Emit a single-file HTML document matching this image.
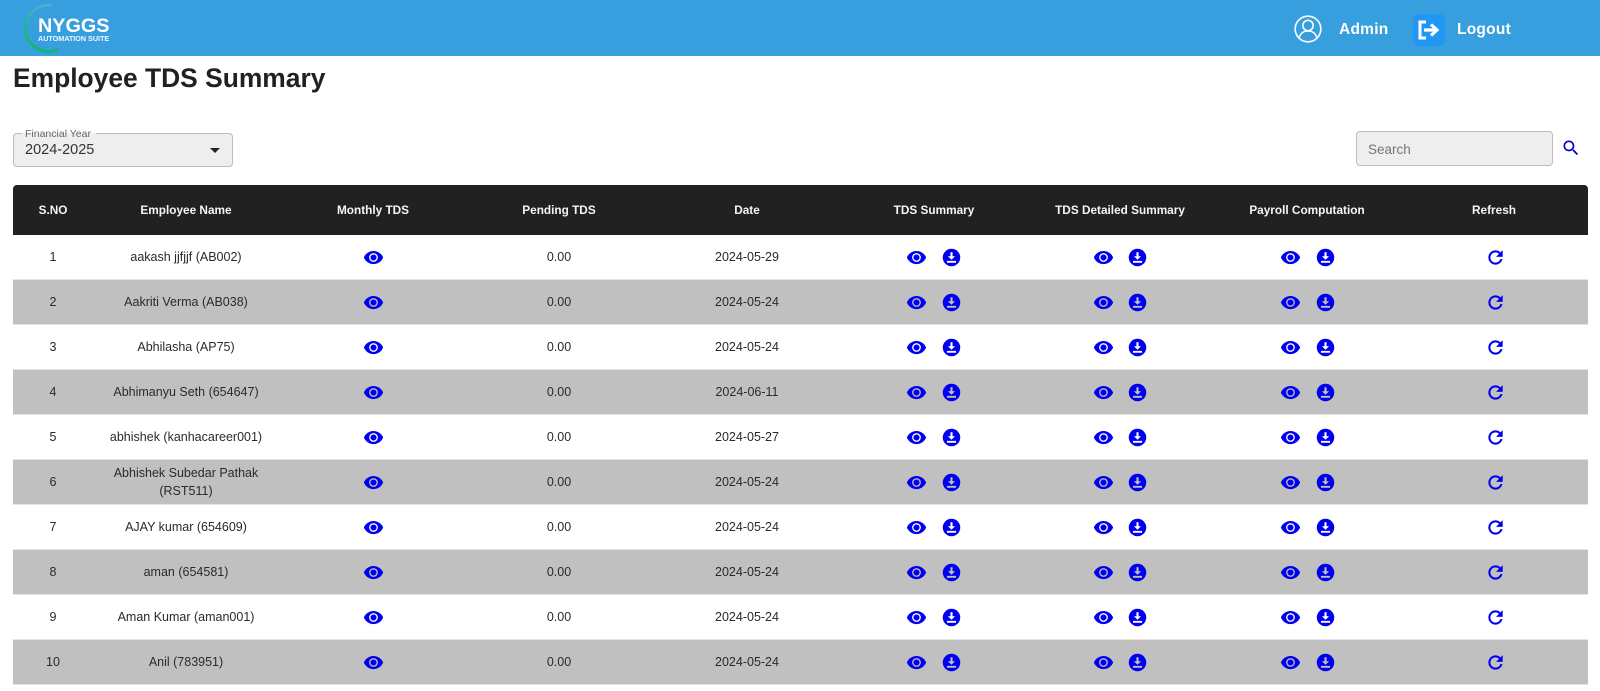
<!DOCTYPE html>
<html><head><meta charset="utf-8"><title>Employee TDS Summary</title>
<style>
*{box-sizing:border-box}
html,body{margin:0;padding:0;background:#fff}
body{width:1600px;height:691px;overflow:hidden;position:relative;font-family:"Liberation Sans",sans-serif;color:#222}
.hd{position:absolute;left:0;top:0;width:1600px;height:56px;background:#389fdf}
.a{position:absolute;white-space:nowrap}
.tb{position:absolute;left:13px;top:185px;width:1575px;height:50px;background:#212121;border-radius:4px 4px 0 0}
.r{position:absolute;left:13px;width:1575px;height:45px;background:#fff;border-bottom:1px solid #e4e4e4}
.g{background:#c0c0c0}
.c{position:absolute;top:0;height:44px;display:flex;align-items:center;justify-content:center;text-align:center;font-size:12.5px;line-height:18px;color:#2a2a2a}
.tb .c{height:50px;color:#f5f5f5;font-weight:bold;font-size:11.8px}
.c1{left:-10px;width:100px}.c2{left:73px;width:200px}.c3{left:260px;width:200px}.c4{left:446px;width:200px}.c5{left:634px;width:200px}.c6{left:821px;width:200px}.c7{left:1007px;width:200px}.c8{left:1194px;width:200px}.c9{left:1381px;width:200px}
svg.i{position:absolute;top:11.5px;width:21px;height:21px;fill:#0000ee}
.e1{left:350px}.e2{left:893px}.d2{left:928px}.e3{left:1080px}.d3{left:1114px}.e4{left:1267px}.d4{left:1302px}.f{left:1471.5px}
</style></head><body>
<svg width="0" height="0" style="position:absolute"><defs>
<symbol id="e" viewBox="0 0 24 24"><path fill-rule="evenodd" d="M12 4.500C7 4.500 2.730 7.610 1 12c1.730 4.390 6 7.500 11 7.500s9.270-3.110 11-7.500c-1.730-4.390-6-7.500-11-7.500zM12 7a5 5 0 1 1 0 10 5 5 0 0 1 0-10zM12 8.500a3.500 3.500 0 1 0 0 7 3.500 3.500 0 0 0 0-7z"/></symbol>
<symbol id="d" viewBox="0 0 24 24"><path fill-rule="evenodd" d="M12 2a10 10 0 1 0 0 20 10 10 0 0 0 0-20zM10.800 6h2.400v4.600h2.900L12 14.500 7.900 10.600h2.900zM6.800 15.800h10.400v2.200H6.800z"/></symbol>
<symbol id="f" viewBox="0 0 24 24"><path stroke="#0000ee" stroke-width=".4" d="M17.650 6.350C16.200 4.900 14.210 4 12 4c-4.420 0-7.990 3.580-7.990 8s3.570 8 7.990 8c3.730 0 6.840-2.550 7.730-6h-2.080c-.82 2.330-3.040 4-5.650 4-3.310 0-6-2.690-6-6s2.690-6 6-6c1.660 0 3.140.69 4.220 1.780L13 11h7V4l-2.350 2.350z"/></symbol>
<linearGradient id="lg" x1="0" y1="0" x2="0" y2="1"><stop offset="0" stop-color="#4aaed0"/><stop offset=".4" stop-color="#25b596"/><stop offset="1" stop-color="#12b56e"/></linearGradient>
</defs></svg>

<div class="hd"></div>
<svg class="a" style="left:14px;top:0" width="70" height="56" viewBox="0 0 70 56"><path d="M38 5.500A23 23 0 0 0 11.500 28.500 A23 23 0 0 0 34 51.500 C37 51.500 40 51 44 49.500" fill="none" stroke="url(#lg)" stroke-width="3"/></svg>
<div class="a" style="left:38px;top:14px;font:bold 19.800px/24px 'Liberation Sans',sans-serif;color:#fff">NYGGS</div>
<div class="a" style="left:38px;top:34px;font:bold 7.200px/9px 'Liberation Sans',sans-serif;color:#f0f8ff">AUTOMATION SUITE</div>

<svg class="a" style="left:1293px;top:15px" width="30" height="30" viewBox="0 0 30 30" fill="none" stroke="#fff" stroke-width="1.600"><circle cx="15" cy="14" r="12.800"/><circle cx="15" cy="10.500" r="5.200"/><path d="M6 23.500c1-5 4.500-7.500 9-7.500s8 2.500 9 7.500"/></svg>
<div class="a" style="left:1339px;top:19.500px;font:bold 15.500px/20px 'Liberation Sans',sans-serif;color:#fff;letter-spacing:.25px">Admin</div>
<div class="a" style="left:1413px;top:14px;width:32px;height:32px;background:#2196f3;border-radius:6px"></div>
<svg class="a" style="left:1413px;top:14px" width="32" height="32" viewBox="0 0 32 32" fill="none" stroke="#fff" stroke-width="3"><path d="M13 8H7v16h6"/><path d="M11 16h13M18 10.500l6 5.500-6 5.500" stroke-width="3.200"/></svg>
<div class="a" style="left:1457px;top:19.500px;font:bold 15.500px/20px 'Liberation Sans',sans-serif;color:#fff;letter-spacing:.25px">Logout</div>

<div class="a" style="left:13px;top:60px;font:bold 26.400px/36px 'Liberation Sans',sans-serif;color:#212121">Employee TDS Summary</div>

<div class="a" style="left:13px;top:133px;width:220px;height:34px;background:#eee;border:1px solid #bdbdbd;border-radius:4px"></div>
<div class="a" style="left:22px;top:129px;padding:0 3px;height:9px;background:linear-gradient(#fff 4px,#eee 4px);width:74px"></div>
<div class="a" style="left:25px;top:128px;font:10.500px/13px 'Liberation Sans',sans-serif;color:#666">Financial Year</div>
<div class="a" style="left:25px;top:141.500px;font:14.500px/17px 'Liberation Sans',sans-serif;color:#333">2024-2025</div>
<div class="a" style="left:210px;top:148px;width:0;height:0;border-left:5px solid transparent;border-right:5px solid transparent;border-top:5px solid #222"></div>

<div class="a" style="left:1356px;top:131px;width:197px;height:35px;background:#eee;border:1px solid #bdbdbd;border-radius:4px"></div>
<div class="a" style="left:1368px;top:141.500px;font:13.500px/16px 'Liberation Sans',sans-serif;color:#757575">Search</div>
<svg class="a" style="left:1561px;top:138px;fill:#0000cc" width="20" height="20" viewBox="0 0 24 24"><path d="M15.500 14h-.79l-.28-.27C15.410 12.590 16 11.110 16 9.500 16 5.910 13.090 3 9.500 3S3 5.910 3 9.500 5.910 16 9.500 16c1.610 0 3.090-.59 4.230-1.570l.27.28v.79l5 4.990L20.490 19l-4.990-5zm-6 0C7.010 14 5 11.990 5 9.500S7.010 5 9.500 5 14 7.010 14 9.500 11.990 14 9.500 14z"/></svg>

<div class="tb">
<div class="c c1">S.NO</div><div class="c c2">Employee Name</div><div class="c c3">Monthly TDS</div><div class="c c4">Pending TDS</div><div class="c c5">Date</div><div class="c c6">TDS Summary</div><div class="c c7">TDS Detailed Summary</div><div class="c c8">Payroll Computation</div><div class="c c9">Refresh</div>
</div>

<div class="r" style="top:235px"><div class="c c1">1</div><div class="c c2">aakash jjfjjf (AB002)</div><div class="c c4">0.00</div><div class="c c5">2024-05-29</div><svg class="i e1"><use href="#e"/></svg><svg class="i e2"><use href="#e"/></svg><svg class="i d2"><use href="#d"/></svg><svg class="i e3"><use href="#e"/></svg><svg class="i d3"><use href="#d"/></svg><svg class="i e4"><use href="#e"/></svg><svg class="i d4"><use href="#d"/></svg><svg class="i f"><use href="#f"/></svg></div>
<div class="r g" style="top:280px"><div class="c c1">2</div><div class="c c2">Aakriti Verma (AB038)</div><div class="c c4">0.00</div><div class="c c5">2024-05-24</div><svg class="i e1"><use href="#e"/></svg><svg class="i e2"><use href="#e"/></svg><svg class="i d2"><use href="#d"/></svg><svg class="i e3"><use href="#e"/></svg><svg class="i d3"><use href="#d"/></svg><svg class="i e4"><use href="#e"/></svg><svg class="i d4"><use href="#d"/></svg><svg class="i f"><use href="#f"/></svg></div>
<div class="r" style="top:325px"><div class="c c1">3</div><div class="c c2">Abhilasha (AP75)</div><div class="c c4">0.00</div><div class="c c5">2024-05-24</div><svg class="i e1"><use href="#e"/></svg><svg class="i e2"><use href="#e"/></svg><svg class="i d2"><use href="#d"/></svg><svg class="i e3"><use href="#e"/></svg><svg class="i d3"><use href="#d"/></svg><svg class="i e4"><use href="#e"/></svg><svg class="i d4"><use href="#d"/></svg><svg class="i f"><use href="#f"/></svg></div>
<div class="r g" style="top:370px"><div class="c c1">4</div><div class="c c2">Abhimanyu Seth (654647)</div><div class="c c4">0.00</div><div class="c c5">2024-06-11</div><svg class="i e1"><use href="#e"/></svg><svg class="i e2"><use href="#e"/></svg><svg class="i d2"><use href="#d"/></svg><svg class="i e3"><use href="#e"/></svg><svg class="i d3"><use href="#d"/></svg><svg class="i e4"><use href="#e"/></svg><svg class="i d4"><use href="#d"/></svg><svg class="i f"><use href="#f"/></svg></div>
<div class="r" style="top:415px"><div class="c c1">5</div><div class="c c2">abhishek (kanhacareer001)</div><div class="c c4">0.00</div><div class="c c5">2024-05-27</div><svg class="i e1"><use href="#e"/></svg><svg class="i e2"><use href="#e"/></svg><svg class="i d2"><use href="#d"/></svg><svg class="i e3"><use href="#e"/></svg><svg class="i d3"><use href="#d"/></svg><svg class="i e4"><use href="#e"/></svg><svg class="i d4"><use href="#d"/></svg><svg class="i f"><use href="#f"/></svg></div>
<div class="r g" style="top:460px"><div class="c c1">6</div><div class="c c2">Abhishek Subedar Pathak<br>(RST511)</div><div class="c c4">0.00</div><div class="c c5">2024-05-24</div><svg class="i e1"><use href="#e"/></svg><svg class="i e2"><use href="#e"/></svg><svg class="i d2"><use href="#d"/></svg><svg class="i e3"><use href="#e"/></svg><svg class="i d3"><use href="#d"/></svg><svg class="i e4"><use href="#e"/></svg><svg class="i d4"><use href="#d"/></svg><svg class="i f"><use href="#f"/></svg></div>
<div class="r" style="top:505px"><div class="c c1">7</div><div class="c c2">AJAY kumar (654609)</div><div class="c c4">0.00</div><div class="c c5">2024-05-24</div><svg class="i e1"><use href="#e"/></svg><svg class="i e2"><use href="#e"/></svg><svg class="i d2"><use href="#d"/></svg><svg class="i e3"><use href="#e"/></svg><svg class="i d3"><use href="#d"/></svg><svg class="i e4"><use href="#e"/></svg><svg class="i d4"><use href="#d"/></svg><svg class="i f"><use href="#f"/></svg></div>
<div class="r g" style="top:550px"><div class="c c1">8</div><div class="c c2">aman (654581)</div><div class="c c4">0.00</div><div class="c c5">2024-05-24</div><svg class="i e1"><use href="#e"/></svg><svg class="i e2"><use href="#e"/></svg><svg class="i d2"><use href="#d"/></svg><svg class="i e3"><use href="#e"/></svg><svg class="i d3"><use href="#d"/></svg><svg class="i e4"><use href="#e"/></svg><svg class="i d4"><use href="#d"/></svg><svg class="i f"><use href="#f"/></svg></div>
<div class="r" style="top:595px"><div class="c c1">9</div><div class="c c2">Aman Kumar (aman001)</div><div class="c c4">0.00</div><div class="c c5">2024-05-24</div><svg class="i e1"><use href="#e"/></svg><svg class="i e2"><use href="#e"/></svg><svg class="i d2"><use href="#d"/></svg><svg class="i e3"><use href="#e"/></svg><svg class="i d3"><use href="#d"/></svg><svg class="i e4"><use href="#e"/></svg><svg class="i d4"><use href="#d"/></svg><svg class="i f"><use href="#f"/></svg></div>
<div class="r g" style="top:640px"><div class="c c1">10</div><div class="c c2">Anil (783951)</div><div class="c c4">0.00</div><div class="c c5">2024-05-24</div><svg class="i e1"><use href="#e"/></svg><svg class="i e2"><use href="#e"/></svg><svg class="i d2"><use href="#d"/></svg><svg class="i e3"><use href="#e"/></svg><svg class="i d3"><use href="#d"/></svg><svg class="i e4"><use href="#e"/></svg><svg class="i d4"><use href="#d"/></svg><svg class="i f"><use href="#f"/></svg></div>
</body></html>
